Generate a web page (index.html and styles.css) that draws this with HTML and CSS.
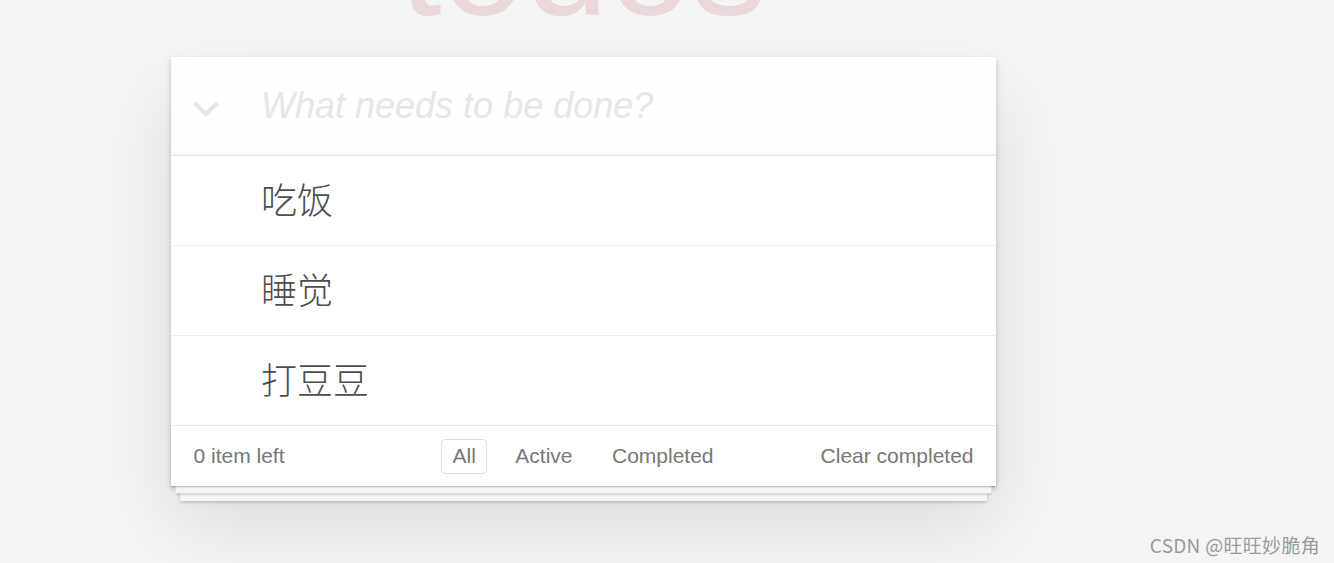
FILE: index.html
```html
<!DOCTYPE html>
<html lang="zh">
<head>
<meta charset="utf-8">
<title>todos</title>
<link rel="stylesheet" href="styles.css">
</head>
<body>
<div class="page">
  <div class="title-area"><h1 class="title">todos</h1></div>
  <section class="todoapp">
    <header class="header">
      <div class="toggle-all">
        <svg width="26" height="17" viewBox="0 0 26 17"><polyline points="1.5,2 13,13 24.5,2" fill="none" stroke="#e6e6e6" stroke-width="4.2"/></svg>
      </div>
      <input class="new-todo" placeholder="What needs to be done?">
    </header>
    <section class="main">
      <ul class="todo-list">
        <li class="todo"><label class="todo-label">吃饭</label></li>
        <li class="todo"><label class="todo-label">睡觉</label></li>
        <li class="todo"><label class="todo-label">打豆豆</label></li>
      </ul>
    </section>
    <footer class="footer">
      <span class="todo-count">0 item left</span>
      <ul class="filters">
        <li><a class="filter selected" href="#/">All</a></li>
        <li><a class="filter" href="#/active">Active</a></li>
        <li><a class="filter" href="#/completed">Completed</a></li>
      </ul>
      <button class="clear-completed">Clear completed</button>
    </footer>
  </section>
</div>
<div class="watermark">CSDN @旺旺妙脆角</div>
</body>
</html>
```
FILE: styles.css
```css
html, body {
  margin: 0;
  padding: 0;
  height: 100%;
}
body {
  background: #f5f5f5;
  font-family: "Liberation Sans", Arial, "Noto Sans CJK SC", sans-serif;
  color: #4d4d4d;
  font-size: 21px;
}
.page {
  width: 825px;
  margin-left: 171px;
}
.title-area {
  height: 57px;
  overflow: hidden;
}
.title {
  margin: -112px 0 0;
  font-size: 150px;
  line-height: 150px;
  font-weight: 400;
  text-align: center;
  color: rgba(175, 47, 47, 0.15);
}
.todoapp {
  background: #fff;
  box-shadow: 0 3px 6px 0 rgba(0, 0, 0, 0.2), 0 37.5px 75px 0 rgba(0, 0, 0, 0.1);
}
.header {
  display: flex;
  align-items: center;
  height: 98.4px;
  background: rgba(0, 0, 0, 0.003);
  box-shadow: inset 0 -3px 1.5px rgba(0, 0, 0, 0.03);
}
.toggle-all {
  width: 90px;
  flex: none;
  display: flex;
  align-items: center;
  padding-left: 22px;
  padding-top: 6px;
  box-sizing: border-box;
  height: 100%;
}
.toggle-all svg {
  display: block;
}
.new-todo {
  flex: 1;
  min-width: 0;
  border: none;
  outline: none;
  background: transparent;
  padding: 24px 24px 24px 0;
  font-family: inherit;
  font-size: 36px;
  line-height: 50.4px;
  height: 50.4px;
  color: inherit;
}
.new-todo::placeholder {
  font-style: italic;
  font-weight: 300;
  color: #e6e6e6;
}
.main {
  border-top: 1px solid #e6e6e6;
}
.todo-list {
  list-style: none;
  margin: 0;
  padding: 0;
}
.todo {
  border-bottom: 1px solid #ededed;
}
.todo:last-child {
  border-bottom: none;
}
.todo-label {
  display: block;
  padding: 23.5px 22.5px 22.3px 90px;
  font-size: 36px;
  line-height: 43.2px;
  font-weight: 300;
  color: #4d4d4d;
  font-family: "Liberation Sans", "Noto Sans CJK SC", sans-serif;
}
.footer {
  display: grid;
  grid-template-columns: 1fr auto 1fr;
  align-items: center;
  height: 30px;
  padding: 12.5px 22.5px 17.5px;
  border-top: 1px solid #e6e6e6;
  color: #777;
  font-size: 21px;
  box-shadow:
    0 1.5px 1.5px rgba(0, 0, 0, 0.2),
    0 12px 0 -4.5px #f6f6f6,
    0 13.5px 1.5px -4.5px rgba(0, 0, 0, 0.2),
    0 24px 0 -9px #f6f6f6,
    0 25.5px 3px -9px rgba(0, 0, 0, 0.2);
}
.todo-count {
  justify-self: start;
  line-height: 30px;
}
.filters {
  list-style: none;
  margin: 0 0 0 -1px;
  padding: 0;
  display: flex;
  gap: 7.5px;
}
.filter {
  display: inline-block;
  margin: 0 4.5px;
  padding: 4.5px 10.5px;
  line-height: 24px;
  border: 1.5px solid transparent;
  border-radius: 4.5px;
  color: inherit;
  text-decoration: none;
}
.filter.selected {
  border-color: rgba(175, 47, 47, 0.2);
}
.clear-completed {
  justify-self: end;
  border: none;
  background: none;
  padding: 0;
  margin: 0;
  font-family: inherit;
  font-size: 21px;
  line-height: 30px;
  color: inherit;
}
.watermark {
  position: absolute;
  right: 14px;
  bottom: 5px;
  font-family: "Noto Sans CJK SC", sans-serif;
  font-size: 19px;
  color: #9a9a9a;
  letter-spacing: 0.3px;
}
```
